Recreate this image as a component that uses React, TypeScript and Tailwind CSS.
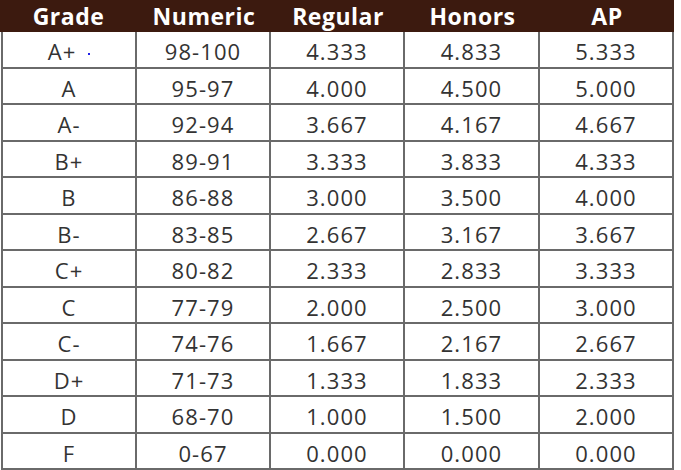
import React from "react";

const rows: [string, string, string, string, string][] = [
  ["A+", "98-100", "4.333", "4.833", "5.333"],
  ["A", "95-97", "4.000", "4.500", "5.000"],
  ["A-", "92-94", "3.667", "4.167", "4.667"],
  ["B+", "89-91", "3.333", "3.833", "4.333"],
  ["B", "86-88", "3.000", "3.500", "4.000"],
  ["B-", "83-85", "2.667", "3.167", "3.667"],
  ["C+", "80-82", "2.333", "2.833", "3.333"],
  ["C", "77-79", "2.000", "2.500", "3.000"],
  ["C-", "74-76", "1.667", "2.167", "2.667"],
  ["D+", "71-73", "1.333", "1.833", "2.333"],
  ["D", "68-70", "1.000", "1.500", "2.000"],
  ["F", "0-67", "0.000", "0.000", "0.000"],
];

const widths = ["w-[137px]", "w-[134px]", "w-[134px]", "w-[135px]", "w-[134px]"];
const headers = ["Grade", "Numeric", "Regular", "Honors", "AP"];

export default function App() {
  return (
    <div
      className="w-[681px] h-[470px] bg-white overflow-hidden"
      style={{ fontFamily: '"Open Sans", sans-serif' }}
    >
      <div className="w-[674px]">
        <div className="flex h-[32px] bg-[#3c1a0f]">
          {headers.map((h, i) => (
            <div
              key={h}
              className={`${widths[i]} flex items-center justify-center text-white font-bold text-[23px] tracking-[0.5px] leading-none`}
            >
              {h}
            </div>
          ))}
        </div>
        <div className="ml-[1px] border-l-2 border-[#6a6a6a] w-[673px]">
          {rows.map((r, ri) => (
            <div key={ri} className="flex h-[36.5px]">
              {r.map((c, ci) => (
                <div
                  key={ci}
                  className={`${ci === 0 ? "w-[134px]" : widths[ci]} flex items-center justify-center border-r-2 border-b-2 border-[#6a6a6a] text-[#333333] text-[22px] tracking-[1.1px] leading-none pt-[4px]`}
                >
                  {c}
                  {ri === 0 && ci === 0 ? (
                    <span className="ml-[12px] mt-[6px] w-[2px] h-[2px] bg-[#2020e8] inline-block" />
                  ) : null}
                </div>
              ))}
            </div>
          ))}
        </div>
      </div>
    </div>
  );
}
